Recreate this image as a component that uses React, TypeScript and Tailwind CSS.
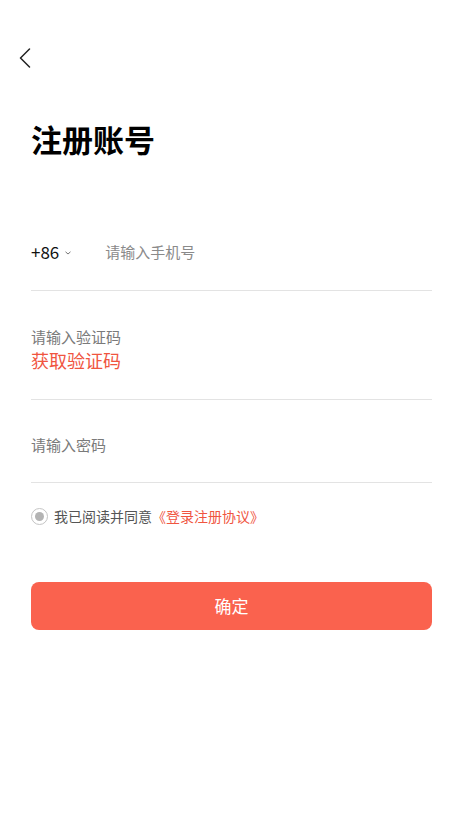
import React, { useState } from 'react';

const font = { fontFamily: '"Noto Sans CJK SC", "Noto Sans", sans-serif' };

const Divider = () => <div className="h-px bg-[#e3e3e3]" />;

const App: React.FC = () => {
  const [agreed] = useState(true);

  return (
    <div className="w-[462px] h-[821px] bg-white text-black" style={font}>
      <div className="pt-[48px] pl-[19px]">
        <svg width="12" height="20" viewBox="0 0 12 20" fill="none">
          <path d="M10.5 1 L1.5 10 L10.5 19" stroke="#222" strokeWidth="1.5" strokeLinecap="round" strokeLinejoin="round" />
        </svg>
      </div>

      <div className="pl-[31px] pr-[30px]">
        <h1 className="mt-[50px] text-[31px] leading-[42px] font-bold">注册账号</h1>

        <div className="mt-[72px] flex items-center h-[40px]">
          <span className="text-[17px] text-[#111]">+86</span>
          <svg className="ml-[6px] mt-[2px]" width="6" height="4" viewBox="0 0 6 4" fill="none">
            <path d="M0.5 0.8 L3 3 L5.5 0.8" stroke="#666" strokeWidth="0.9" />
          </svg>
          <span className="ml-[34px] text-[15px] text-[#8a8a8a]">请输入手机号</span>
        </div>
        <div className="mt-[18px]">
          <Divider />
        </div>

        <div className="mt-[35px] flex flex-col">
          <span className="text-[15px] leading-[22px] text-[#7a7a7a]">请输入验证码</span>
          <span className="text-[18px] leading-[24px] text-[#f0553f]">获取验证码</span>
        </div>
        <div className="mt-[27px]">
          <Divider />
        </div>

        <div className="mt-[34px] text-[15px] leading-[22px] text-[#7a7a7a]">请输入密码</div>
        <div className="mt-[26px]">
          <Divider />
        </div>

        <div className="mt-[23px] flex items-center">
          <span className="w-[17px] h-[17px] rounded-full border-[1.5px] border-[#c4c4c4] flex items-center justify-center">
            {agreed && <span className="w-[9px] h-[9px] rounded-full bg-[#b3b3b3]" />}
          </span>
          <span className="ml-[6px] text-[14px] text-[#555]">我已阅读并同意</span>
          <span className="text-[14px] text-[#f0553f]">《登录注册协议》</span>
        </div>

        <button className="mt-[55px] w-full h-[48px] rounded-[8px] bg-[#fa624e] text-white text-[17px]">
          确定
        </button>
      </div>
    </div>
  );
};

export default App;
